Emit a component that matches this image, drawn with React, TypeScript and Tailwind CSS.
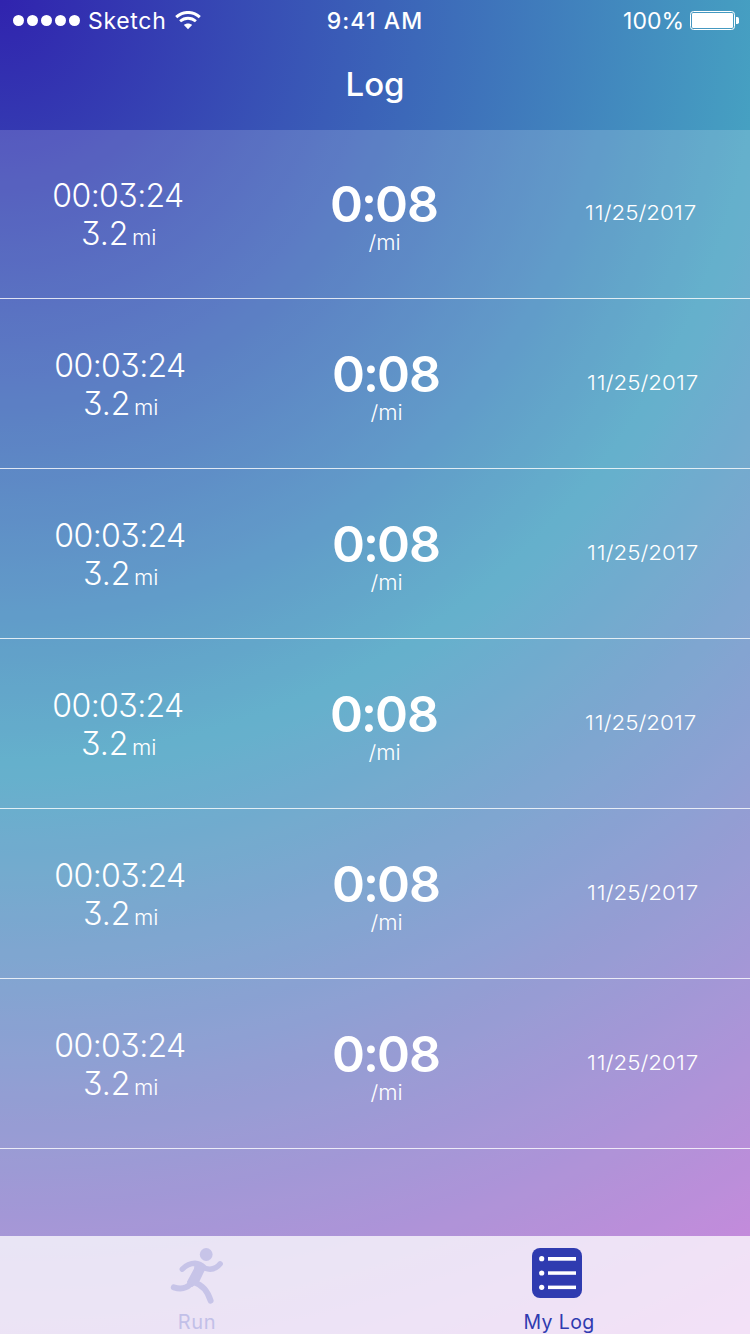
const runs = [
  { nudge: false, first: true },
  { nudge: true, first: false },
  { nudge: true, first: false },
  { nudge: false, first: false },
  { nudge: true, first: false },
  { nudge: true, first: false },
];

function Wifi() {
  return (
    <svg width="26" height="19" viewBox="0 0 26 19" fill="none" stroke="white">
      <path d="M1.2 6.1C8 -0.1 18 -0.1 24.8 6.1" strokeWidth="3" />
      <path d="M5.1 10.3C9.8 6.2 16.2 6.2 20.9 10.3" strokeWidth="2.8" />
      <path d="M13 18.2L8.9 14.1C11.2 12.1 14.8 12.1 17.1 14.1Z" fill="white" stroke="none" />
    </svg>
  );
}

function Battery() {
  return (
    <svg width="50" height="20" viewBox="0 0 50 20">
      <rect x="0.5" y="1.5" width="44" height="18" rx="3" fill="none" stroke="white" />
      <rect x="2" y="3" width="41" height="15" rx="1.2" fill="white" />
      <path d="M46 7h1.3q1.7 0 1.7 1.7v3.6q0 1.7-1.7 1.7H46z" fill="white" />
    </svg>
  );
}

function Runner() {
  return (
    <svg width="54" height="56" viewBox="0 0 54 56" fill="none" stroke="#c7c4e8" strokeLinecap="round" strokeLinejoin="round">
      <circle cx="36.2" cy="6.5" r="6.4" fill="#c7c4e8" stroke="none" />
      <path d="M12.3 21.2Q18 15.3 25 15.3Q30 15.6 35 20.3Q44 23.5 50.2 15.8" strokeWidth="5.4" />
      <path d="M3.8 39.3Q14 42.5 20 36.5L28 20" strokeWidth="6" />
      <path d="M25.5 15.5L34.5 20.5L28.5 33L22 38L18 34L25 21Z" fill="#c7c4e8" strokeWidth="2" />
      <path d="M24.5 34.5Q36 38 40.6 52.6" strokeWidth="6" />
    </svg>
  );
}

function LogIcon() {
  return (
    <svg width="50" height="50" viewBox="0 0 50 50">
      <rect width="50" height="50" rx="8" fill="#2f3bb0" />
      <g fill="white">
        <circle cx="9.7" cy="10.7" r="2.6" />
        <circle cx="9.7" cy="25" r="2.6" />
        <circle cx="9.7" cy="39.3" r="2.6" />
        <rect x="16" y="9" width="28" height="3.7" />
        <rect x="16" y="23.3" width="28" height="3.5" />
        <rect x="16" y="37.6" width="28" height="3.5" />
      </g>
    </svg>
  );
}

export default function App() {
  return (
    <div className="flex h-[1334px] w-[750px] flex-col overflow-hidden bg-[radial-gradient(circle_at_0_0,#3023ae_0px,#46a1c2_765px,#c86dd7_1545px)] font-['Inter',sans-serif] text-white">
      <header className="flex h-[130px] flex-col">
        <div className="grid h-10 grid-cols-[1fr_auto_1fr] items-center text-[23px] leading-[40px]">
          <div className="flex h-10 items-center pl-[13px]">
            <div className="flex gap-[3px]">
              {[0, 1, 2, 3, 4].map((dot) => (
                <span key={dot} className="size-[11px] rounded-full bg-white" />
              ))}
            </div>
            <span className="ml-2 h-10 w-[87px] whitespace-nowrap pt-px tracking-[0.7px]">Sketch</span>
            <Wifi />
          </div>
          <span className="h-10 pt-px font-medium tracking-[1.1px] [font-feature-settings:'calt'_0]">9:41 AM</span>
          <div className="flex h-10 items-center justify-end pr-[10px]">
            <span className="mr-[6px] h-10 pt-px">100%</span>
            <Battery />
          </div>
        </div>
        <h1 className="pt-[21px] text-center text-[33px] leading-[46px] font-medium">Log</h1>
      </header>

      <main className="flex-1 bg-white/[0.17] [font-feature-settings:'cv09','calt'_0]">
        {runs.map((run, index) => (
          <section
            key={index}
            className={`flex border-b border-white/80 ${run.first ? "h-[169px] pt-[46px]" : "h-[170px] pt-[47px]"} ${run.nudge ? "pl-[2px]" : ""}`}
          >
            <div className="w-[236px] shrink-0 pt-px text-center font-light">
              <div className="text-[32px] leading-[38px] tracking-[-0.6px]">00:03:24</div>
              <div className="text-[32px] leading-[38px]">
                3.2<span className="ml-[4px] inline-block origin-left scale-x-[1.08] text-[20.5px]">mi</span>
              </div>
            </div>
            <div className="ml-[48px] w-[200px] shrink-0 text-center">
              <div className="text-[50px] leading-[56px] font-semibold tracking-[-1px]">
                0<span className="mx-[-1px]">:</span>08
              </div>
              <div className="scale-x-[1.08] pl-px text-[20.5px] leading-[22px] font-light">/mi</div>
            </div>
            <div className="ml-[57px] w-[200px] shrink-0 scale-x-[1.12] pt-[22px] text-center text-[20px] leading-[30px] font-light">
              <span className="tracking-[1px]">1</span>1/25/20<span className="tracking-[0.8px]">17</span>
            </div>
          </section>
        ))}
      </main>

      <div className="bg-white/[0.17]">
        <nav className="flex h-[98px] bg-white/75 text-[20px] leading-6">
          <div className="flex w-[393px] flex-col items-center pt-[12px] text-[#c2c0e8]">
            <Runner />
            <span className="mt-[6px] pl-px tracking-[0.6px]">Run</span>
          </div>
          <div className="flex w-[328px] flex-col items-center pt-[12px] text-[#2f3bb0]">
            <LogIcon />
            <span className="mt-[12px] pl-[4px] text-[19.5px] tracking-[0.4px]">My Log</span>
          </div>
        </nav>
      </div>
    </div>
  );
}
